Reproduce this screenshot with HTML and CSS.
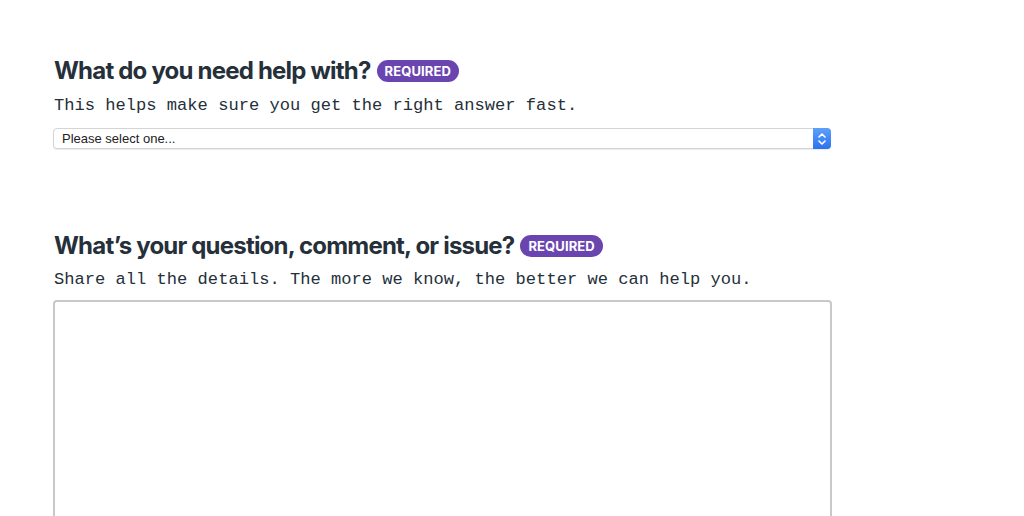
FILE: index.html
```html
<!DOCTYPE html>
<html lang="en">
<head>
  <meta charset="UTF-8" />
  <title>Contact support</title>
  <link rel="stylesheet" href="styles.css">
</head>
<body>
  <form class="support-form">
    <div class="field">
      <h2 class="field-title">What do you need help with? <span class="badge">REQUIRED</span></h2>
      <p class="field-hint">This helps make sure you get the right answer fast.</p>
      <div class="select-wrap">
        <select class="select">
          <option>Please select one...</option>
        </select>
        <span class="stepper">
          <svg width="10" height="14" viewBox="0 0 10 14"><path d="M2 5 L5 2 L8 5 M2 9 L5 12 L8 9" fill="none" stroke="#fff" stroke-width="1.6" stroke-linecap="round" stroke-linejoin="round"/></svg>
        </span>
      </div>
    </div>

    <div class="field field-second">
      <h2 class="field-title">What’s your question, comment, or issue? <span class="badge">REQUIRED</span></h2>
      <p class="field-hint">Share all the details. The more we know, the better we can help you.</p>
      <textarea class="textarea"></textarea>
    </div>
  </form>
</body>
</html>
```

FILE: styles.css
```css
:root {
  --text: #25303a;
  --purple: #6a45b0;
  --border: #c8c8c8;
}

html, body {
  margin: 0;
  padding: 0;
  background: #fff;
  color: var(--text);
}

.support-form {
  width: 778px;
  padding: 56px 0 0 53px;
}

.field-title {
  margin: 0;
  font-family: Inter, sans-serif;
  font-weight: 700;
  font-size: 24px;
  letter-spacing: -0.8px;
  line-height: 30px;
  padding-left: 1px;
  display: flex;
  align-items: center;
  gap: 6px;
}

.badge {
  display: inline-block;
  background: var(--purple);
  color: #fff;
  font-size: 13px;
  letter-spacing: 0.1px;
  font-weight: 700;
  line-height: 22px;
  height: 22px;
  padding: 0 8px;
  border-radius: 11px;
}

.field-hint {
  margin: 6px 0 0;
  padding-left: 1px;
  font-family: "Liberation Mono", monospace;
  font-size: 17.1px;
  line-height: 28px;
}

.select-wrap {
  position: relative;
  margin-top: 8px;
  height: 21px;
}

.select {
  -webkit-appearance: none;
  appearance: none;
  width: 100%;
  height: 21px;
  box-sizing: border-box;
  border: 1px solid #d4d4d4;
  border-radius: 4px;
  background: #fff;
  font-family: "Liberation Sans", sans-serif;
  font-size: 13px;
  color: #222;
  padding: 0 8px;
  box-shadow: 0 1px 1px rgba(0,0,0,0.08);
}

.stepper {
  position: absolute;
  right: 0;
  top: 0;
  width: 18px;
  height: 21px;
  background: linear-gradient(#5fa0f8, #2a73f0);
  border-radius: 0 4px 4px 0;
  display: flex;
  align-items: center;
  justify-content: center;
}

.field-second {
  margin-top: 82px;
}

.field-second .field-hint {
  margin-top: 5px;
}

.textarea {
  display: block;
  margin-top: 6px;
  width: 779px;
  height: 260px;
  box-sizing: border-box;
  border: 2px solid var(--border);
  border-radius: 4px;
  resize: none;
}
```
